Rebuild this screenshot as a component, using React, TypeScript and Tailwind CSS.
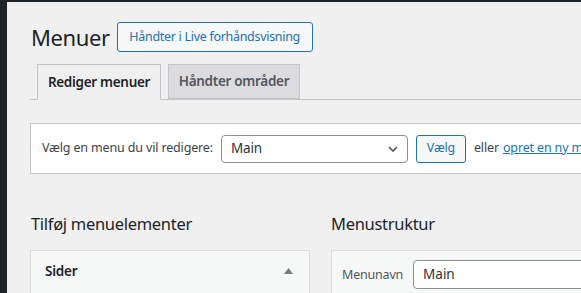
import React from "react";

const font = { fontFamily: '"Noto Sans", "Open Sans", sans-serif' };

export default function App() {
  return (
    <div className="w-[581px] h-[293px] overflow-hidden bg-[#f0f0f1] flex flex-col text-[#3c434a]" style={font}>
      <div className="h-[2px] bg-[#1d2327] shrink-0" />
      <div className="flex flex-1">
        <div className="w-[7px] bg-[#1d2327] shrink-0" />
        <div className="flex-1 pl-[23px] min-w-[700px]">
          {/* header */}
          <div className="flex items-center h-[30px] mt-[20px]">
            <h1 className="text-[22px] leading-[30px] tracking-[-0.4px] text-[#1d2327] font-normal pl-[1px]">Menuer</h1>
            <button className="ml-[7px] h-[30px] w-[196px] border border-[#2271b1] rounded-[3px] bg-[#f6f7f7] text-[#2271b1] text-[12.5px] tracking-[-0.3px] leading-none">
              Håndter i Live forhåndsvisning
            </button>
          </div>

          {/* tabs */}
          <div className="flex items-end gap-[7px] pl-[7px] mt-[12px] border-b border-[#c3c4c7] h-[36px]">
            <div className="w-[124px] h-[36px] -mb-px border border-[#c3c4c7] border-b-[#f0f0f1] bg-[#f0f0f1] flex items-center justify-center text-[13.5px] tracking-[-0.3px] font-semibold text-[#1d2327]">
              Rediger menuer
            </div>
            <div className="w-[132px] h-[35px] border border-[#c3c4c7] bg-[#dcdcde] flex items-center justify-center text-[13.5px] tracking-[-0.3px] font-semibold text-[#50575e]">
              Håndter områder
            </div>
          </div>

          {/* select box */}
          <div className="mt-[23px] h-[51px] bg-white border border-[#c3c4c7] flex items-center pl-[11px] text-[12.5px] tracking-[-0.15px]">
            <span>Vælg en menu du vil redigere:</span>
            <div className="ml-[8px] w-[187px] h-[28px] border border-[#8c8f94] rounded-[4px] bg-white flex items-center justify-between pl-[9px] pr-[8px]">
              <span className="text-[13.5px] text-[#2c3338]">Main</span>
              <svg width="12" height="12" viewBox="0 0 12 12" className="text-[#50575e]">
                <path d="M2 4l4 4 4-4" fill="none" stroke="currentColor" strokeWidth="1.6" />
              </svg>
            </div>
            <button className="ml-[8px] w-[50px] h-[28px] border border-[#2271b1] rounded-[3px] bg-[#f6f7f7] text-[#2271b1] text-[12.5px] leading-none">
              Vælg
            </button>
            <span className="ml-[8px]">eller</span>
            <a className="ml-[4px] text-[#2271b1] underline">opret en ny menu</a>
          </div>

          {/* columns */}
          <div className="flex mt-[38px]">
            <div className="w-[280px] shrink-0">
              <h2 className="text-[16.5px] leading-[24px] tracking-[-0.3px] text-[#1d2327] pl-[1px]">Tilføj menuelementer</h2>
              <div className="mt-[14px] h-[60px] border border-[#dcdcde] bg-[#f6f7f7] flex items-start justify-between pt-[10px] pl-[14px] pr-[16px]">
                <span className="text-[13.5px] tracking-[-0.2px] font-semibold text-[#1d2327]">Sider</span>
                <svg width="9" height="6" viewBox="0 0 9 6" className="mt-[7px]">
                  <path d="M0 6L4.5 0 9 6z" fill="#787c82" />
                </svg>
              </div>
            </div>
            <div className="ml-[21px] flex-1">
              <h2 className="text-[16.5px] leading-[24px] tracking-[-0.3px] text-[#1d2327]">Menustruktur</h2>
              <div className="mt-[14px] h-[60px] border border-[#dcdcde] bg-[#f6f7f7] flex items-start pt-[9px] pl-[10px]">
                <span className="text-[12.5px] tracking-[-0.2px] text-[#50575e] mt-[6px]">Menunavn</span>
                <div className="ml-[10px] w-[260px] h-[29px] border border-[#8c8f94] rounded-[4px] bg-white flex items-center pl-[9px] text-[13.5px] text-[#2c3338]">
                  Main
                </div>
              </div>
            </div>
          </div>
        </div>
      </div>
    </div>
  );
}
